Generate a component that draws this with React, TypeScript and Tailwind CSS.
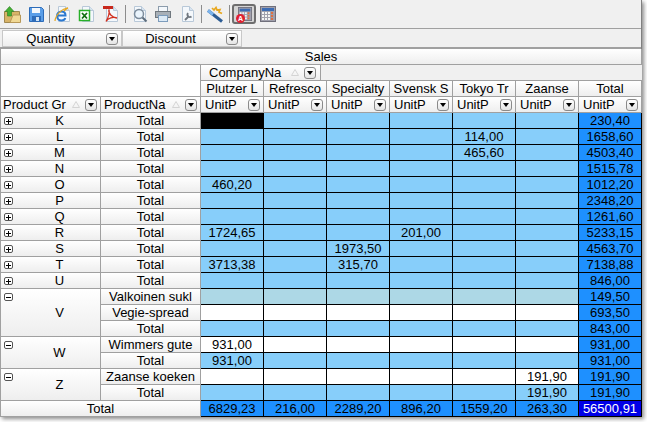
import type { ReactNode } from "react";

const FONT = "font-['Liberation_Sans',Arial,sans-serif]";
const COMPANIES = ["Plutzer L", "Refresco", "Specialty", "Svensk S", "Tokyo Tr", "Zaanse", "Total"];

type Row = { group?: string; span?: number; name: string; tone: "sky" | "pale" | "white"; values: (string | null)[]; expanded?: boolean };

const e = null;
const ROWS: Row[] = [
  { group: "K", name: "Total", tone: "sky", values: [e, e, e, e, e, e, "230,40"] },
  { group: "L", name: "Total", tone: "sky", values: [e, e, e, e, "114,00", e, "1658,60"] },
  { group: "M", name: "Total", tone: "sky", values: [e, e, e, e, "465,60", e, "4503,40"] },
  { group: "N", name: "Total", tone: "sky", values: [e, e, e, e, e, e, "1515,78"] },
  { group: "O", name: "Total", tone: "sky", values: ["460,20", e, e, e, e, e, "1012,20"] },
  { group: "P", name: "Total", tone: "sky", values: [e, e, e, e, e, e, "2348,20"] },
  { group: "Q", name: "Total", tone: "sky", values: [e, e, e, e, e, e, "1261,60"] },
  { group: "R", name: "Total", tone: "sky", values: ["1724,65", e, e, "201,00", e, e, "5233,15"] },
  { group: "S", name: "Total", tone: "sky", values: [e, e, "1973,50", e, e, e, "4563,70"] },
  { group: "T", name: "Total", tone: "sky", values: ["3713,38", e, "315,70", e, e, e, "7138,88"] },
  { group: "U", name: "Total", tone: "sky", values: [e, e, e, e, e, e, "846,00"] },
  { group: "V", span: 3, expanded: true, name: "Valkoinen sukl", tone: "pale", values: [e, e, e, e, e, e, "149,50"] },
  { name: "Vegie-spread", tone: "white", values: [e, e, e, e, e, e, "693,50"] },
  { name: "Total", tone: "sky", values: [e, e, e, e, e, e, "843,00"] },
  { group: "W", span: 2, expanded: true, name: "Wimmers gute", tone: "white", values: ["931,00", e, e, e, e, e, "931,00"] },
  { name: "Total", tone: "sky", values: ["931,00", e, e, e, e, e, "931,00"] },
  { group: "Z", span: 2, expanded: true, name: "Zaanse koeken", tone: "white", values: [e, e, e, e, e, "191,90", "191,90"] },
  { name: "Total", tone: "sky", values: [e, e, e, e, e, "191,90", "191,90"] },
];
const GRAND = ["6829,23", "216,00", "2289,20", "896,20", "1559,20", "263,30", "56500,91"];

const TONES = { sky: "bg-[#87cefa]", pale: "bg-[#add8e6]", white: "bg-white" };
const HEAD = "bg-gradient-to-b from-white to-[#eeeeee] border-r border-b border-[#a0a0a0]";

function DropButton() {
  return (
    <span className="flex h-[12px] w-[12px] shrink-0 items-center justify-center rounded-[3px] border border-[#8a8a8a] bg-gradient-to-b from-white to-[#e4e4e4]">
      <span className="h-0 w-0 border-x-[3.5px] border-t-[4px] border-x-transparent border-t-black" />
    </span>
  );
}

function SortMark() {
  return (
    <svg width="8" height="7" viewBox="0 0 8 7" className="shrink-0">
      <path d="M4 .5 7.500 6.500H.5Z" fill="none" stroke="#d4d4d4" />
    </svg>
  );
}

function Expander({ open }: { open?: boolean }) {
  return (
    <span className="absolute left-[3px] top-[4px] flex h-[8px] w-[9px] items-center justify-center rounded-[2px] border border-[#555] bg-white">
      <span className="relative block h-px w-[5px] bg-black">
        {!open && <span className="absolute left-[2px] top-[-2px] block h-[5px] w-px bg-black" />}
      </span>
    </span>
  );
}

function FieldHead({ label, sort = true, pad }: { label: string; sort?: boolean; pad: string }) {
  return (
    <div className={`${HEAD} flex items-center ${pad} pr-[3px]`}>
      <span className="min-w-0 flex-1 overflow-hidden whitespace-nowrap">{label}</span>
      {sort && <SortMark />}
      <span className="ml-[5px]"><DropButton /></span>
    </div>
  );
}

function Tool({ children }: { children: ReactNode }) {
  return <span className="flex h-[28px] w-[24px] shrink-0 items-center justify-center">{children}</span>;
}

function Sep({ first }: { first?: boolean }) {
  return <span className={`${first ? "ml-[1px]" : "ml-[2px]"} mr-[1px] h-[18px] w-px shrink-0 bg-[#8c8c8c]`} />;
}

function Page({ children }: { children?: ReactNode }) {
  return (
    <svg width="18" height="18" viewBox="0 0 18 18">
      <path d="M4.500 1.500h7l4 4v11h-11Z" fill="#f4f8fc" stroke="#b8c8d8" />
      <path d="M11.500 1.500v4h4" fill="#d8e4f0" stroke="#b8c8d8" />
      {children}
    </svg>
  );
}

function CalcIcon({ size = 16 }: { size?: number }) {
  return (
    <svg width={size} height={size} viewBox="0 0 16 16">
      <rect x=".5" y=".5" width="15" height="15" fill="#a0a0ac" stroke="#70707c" />
      <rect x="2" y="2" width="12" height="3" fill="#3c6cb4" />
      {[6, 9, 12].map((y) =>
        [2, 5, 8, 11].map((x) => (
          <rect key={`${x}-${y}`} x={x} y={y} width="2" height="2" fill={x === 11 ? "#e07040" : "#f4f4f4"} />
        ))
      )}
    </svg>
  );
}

function Toolbar() {
  return (
    <div className="flex h-[29px] items-center border-b border-[#a0a0a0] bg-[#f0f0f0]">
      <Tool>
        <svg width="17" height="17" viewBox="0 0 17 17">
          <path d="M.5 5.500h15v11H.5Z" fill="#d8b468" stroke="#a08850" />
          <path d="M6 16.500 9 9h7.500v7.500Z" fill="#f0d894" stroke="#b89858" />
          <path d="M5.500.5 10 5.500H7.500V10h-4V5.500H1Z" fill="#44b034" stroke="#2c8024" strokeWidth=".6" />
        </svg>
      </Tool>
      <Tool>
        <svg width="15" height="15" viewBox="0 0 15 15">
          <path d="M.5.5h12l2 2v12H.5Z" fill="#5a9ee8" stroke="#2e6cb8" />
          <rect x="3" y="1" width="8" height="5" fill="#f4f8fc" />
          <rect x="3" y="9" width="9" height="5.500" fill="#2e6cb8" />
          <rect x="7" y="10" width="3" height="4" fill="#cfe2f6" />
        </svg>
      </Tool>
      <Sep first />
      <Tool>
        <Page>
          <path d="M4 10.500h7.500C11.500 8 10 6.500 7.500 6.500S3 8.500 3 11s2 4.500 4.500 4.500c2 0 3.300-1 3.800-2.500" fill="none" stroke="#2a78d0" strokeWidth="2" />
          <path d="M1 16C1.500 10 8 3.500 14 3c-2 1-3 2-4 3" fill="none" stroke="#e8a820" strokeWidth="1.200" />
        </Page>
      </Tool>
      <Tool>
        <Page>
          <rect x="1.500" y="5.500" width="10" height="10" fill="#fff" stroke="#28b028" strokeWidth="1.500" />
          <path d="M4 8l5 5.500M9 8l-5 5.500" stroke="#107010" strokeWidth="1.800" />
        </Page>
      </Tool>
      <Tool>
        <Page>
          <rect x="1" y="1" width="10" height="3" fill="#c8281c" />
          <path d="M7 4.500c-1 4 3 8 8 8.500-4-1.500-9 0-11 3.500 2-3.500 4-7 3-12Z" fill="none" stroke="#d03020" strokeWidth="1.300" />
        </Page>
      </Tool>
      <Sep />
      <Tool>
        <Page>
          <circle cx="9" cy="9" r="4.500" fill="#eaf4fc" stroke="#7c8c9c" strokeWidth="1.500" />
          <path d="M12.500 12.500 16.500 16.500" stroke="#5c6c7c" strokeWidth="2" />
        </Page>
      </Tool>
      <Tool>
        <svg width="18" height="18" viewBox="0 0 18 18">
          <rect x="4.500" y="1.500" width="9" height="6" fill="#f4f8fc" stroke="#8c9cac" />
          <rect x="1.500" y="6.500" width="15" height="6" fill="#a8b0b8" stroke="#70787f" />
          <rect x="4.500" y="10.500" width="9" height="6" fill="#dceaf6" stroke="#7c9cbc" />
        </svg>
      </Tool>
      <Tool>
        <Page>
          <path d="M7 15l4-4M10 8a2.500 2.500 0 0 0 3.500 3.500" fill="none" stroke="#707880" strokeWidth="1.800" />
        </Page>
      </Tool>
      <Sep />
      <Tool>
        <svg width="17" height="17" viewBox="0 0 17 17">
          <path d="M1 4.500 15 15.500" stroke="#2c5c94" strokeWidth="3" />
          <path d="M1 4.500 6 8.500" stroke="#7cb4ec" strokeWidth="3" />
          <path d="M5 2l2 2 2-2.500 1 2.500 3-.5-1 2.500 3 1.500" fill="none" stroke="#e8a820" strokeWidth="1.700" />
        </svg>
      </Tool>
      <Sep />
      <span className="ml-[1px] flex h-[20px] w-[24px] shrink-0 items-center justify-center rounded-[3px] border-2 border-[#6e6e6e] bg-[#d4d4d4]">
        <span className="relative ml-[2px] flex">
          <CalcIcon size={14} />
          <span className="absolute bottom-[-2px] left-[-2px] flex h-[9px] w-[9px] items-center justify-center rounded-full bg-[#e02030] text-[7px] font-bold leading-none tracking-normal text-white">A</span>
        </span>
      </span>
      <Tool><CalcIcon /></Tool>
    </div>
  );
}

function FilterBar() {
  return (
    <div className="flex h-[20px] items-start border-b-2 border-[#a0a0a0] bg-[#f0f0f0] pl-[2px] pt-[1px]">
      {["Quantity", "Discount"].map((f) => (
        <div key={f} className="flex h-[17px] w-[120px] items-center border border-[#c8c8c8] bg-gradient-to-b from-white to-[#eeeeee] pr-[3px]">
          <span className="flex-1 pr-[8px] text-center">{f}</span>
          <DropButton />
        </div>
      ))}
    </div>
  );
}

export default function App() {
  return (
    <div className={`${FONT} h-[422px] w-[647px] overflow-hidden bg-white text-[13px] leading-[16px] text-black`}>
      <div className="h-[417px] w-[642px] border-r border-[#808080] shadow-[2px_2px_4px_rgba(0,0,0,0.45)]">
        <Toolbar />
        <FilterBar />
        <div className="grid grid-cols-[100px_100px_repeat(7,63px)] grid-rows-[repeat(23,16px)] border-l border-[#a0a0a0]">
          <div className={`${HEAD} col-span-9 text-center`}>Sales</div>

          <div className="col-span-2 row-span-2 border-b border-r border-[#a0a0a0] bg-white" />
          <div className="col-span-7 flex border-b border-[#a0a0a0] bg-[#f0f0f0]">
            <div className="flex w-[120px] items-center border-r border-[#a0a0a0] bg-gradient-to-b from-white to-[#eeeeee] pl-[8px] pr-[4px]">
              <span className="flex-1 whitespace-nowrap">CompanyNa</span>
              <SortMark />
              <span className="ml-[5px]"><DropButton /></span>
            </div>
          </div>

          {COMPANIES.map((c) => (
            <div key={c} className={`${HEAD} overflow-hidden whitespace-nowrap text-center`}>{c}</div>
          ))}

          <FieldHead label="Product Gr" pad="pl-[2px]" />
          <FieldHead label="ProductNa" pad="pl-[3px]" />
          {COMPANIES.map((c) => (
            <FieldHead key={c} label="UnitP" sort={false} pad="pl-[4px]" />
          ))}

          {ROWS.map((r, i) => (
            <div key={i} className="contents">
              {r.group && (
                <div
                  className={`${HEAD} relative flex items-center justify-center pl-[18px] ${r.span === 3 ? "row-span-3" : r.span === 2 ? "row-span-2" : ""}`}
                >
                  <Expander open={r.expanded} />
                  {r.group}
                </div>
              )}
              <div className={`${HEAD} text-center whitespace-nowrap`}>{r.name}</div>
              {r.values.map((v, j) => {
                const isTotal = j === 6;
                const black = i === 0 && j === 0;
                const bg = black ? "bg-black" : isTotal ? "bg-[#1e90ff]" : TONES[r.tone];
                return (
                  <div key={j} className={`${bg} border-b border-r border-black text-center`}>
                    {v}
                  </div>
                );
              })}
            </div>
          ))}

          <div className={`${HEAD} col-span-2 text-center`}>Total</div>
          {GRAND.map((v, j) => (
            <div
              key={v}
              className={`border-b border-r border-black text-center ${j === 6 ? "bg-[#0000e6] text-white" : "bg-[#1e90ff]"}`}
            >
              {v}
            </div>
          ))}
        </div>
      </div>
    </div>
  );
}
